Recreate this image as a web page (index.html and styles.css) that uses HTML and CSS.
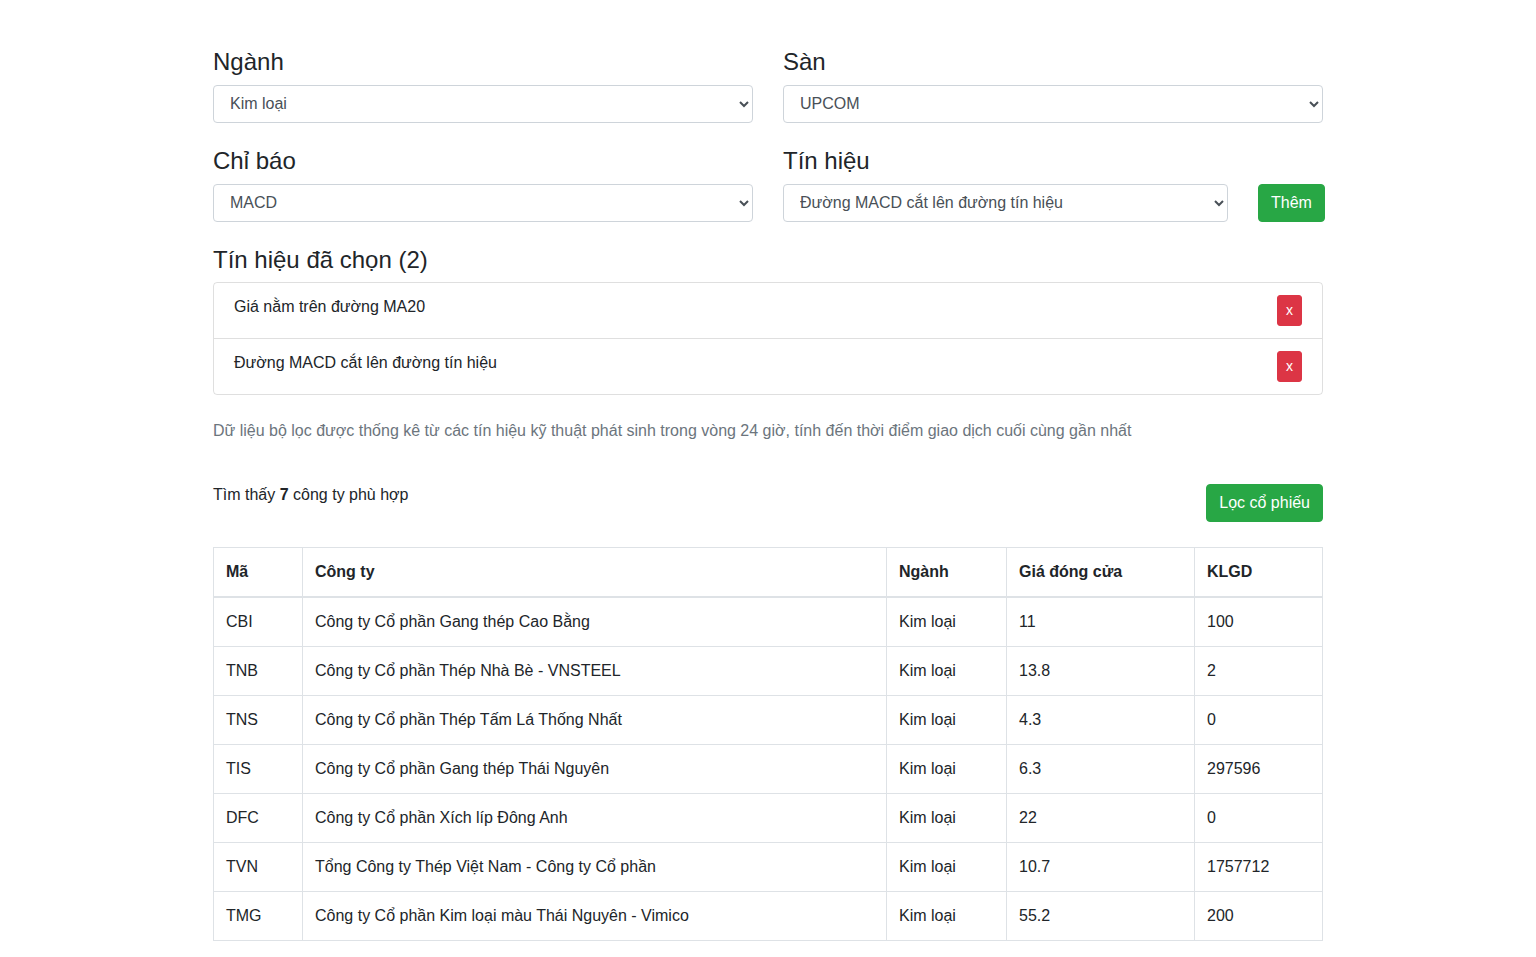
FILE: index.html
```html
<!DOCTYPE html>
<html lang="vi">
<head>
<meta charset="utf-8">
<title>Lọc cổ phiếu</title>
<link rel="stylesheet" href="styles.css">
</head>
<body>
<div class="container">
  <div class="grid-row">
    <div class="field">
      <h4 class="label">Ngành</h4>
      <select class="select"><option>Kim loại</option></select>
    </div>
    <div class="field">
      <h4 class="label">Sàn</h4>
      <select class="select"><option>UPCOM</option></select>
    </div>
  </div>
  <div class="grid-row">
    <div class="field">
      <h4 class="label">Chỉ báo</h4>
      <select class="select"><option>MACD</option></select>
    </div>
    <div class="field">
      <h4 class="label">Tín hiệu</h4>
      <div class="inline">
        <select class="select narrow"><option>Đường MACD cắt lên đường tín hiệu</option></select>
        <button class="btn btn-success add">Thêm</button>
      </div>
    </div>
  </div>
  <div class="field">
    <h4 class="label">Tín hiệu đã chọn (2)</h4>
    <ul class="list-group">
      <li class="list-item"><span>Giá nằm trên đường MA20</span><button class="btn btn-danger btn-sm">x</button></li>
      <li class="list-item"><span>Đường MACD cắt lên đường tín hiệu</span><button class="btn btn-danger btn-sm">x</button></li>
    </ul>
  </div>
  <p class="muted">Dữ liệu bộ lọc được thống kê từ các tín hiệu kỹ thuật phát sinh trong vòng 24 giờ, tính đến thời điểm giao dịch cuối cùng gần nhất</p>
  <div class="results">
    <span>Tìm thấy <b>7</b> công ty phù hợp</span>
    <button class="btn btn-success filter">Lọc cổ phiếu</button>
  </div>
  <table class="table">
    <colgroup>
      <col class="c1"><col class="c2"><col class="c3"><col class="c4"><col class="c5">
    </colgroup>
    <thead>
      <tr><th>Mã</th><th>Công ty</th><th>Ngành</th><th>Giá đóng cửa</th><th>KLGD</th></tr>
    </thead>
    <tbody>
      <tr><td>CBI</td><td>Công ty Cổ phần Gang thép Cao Bằng</td><td>Kim loại</td><td>11</td><td>100</td></tr>
      <tr><td>TNB</td><td>Công ty Cổ phần Thép Nhà Bè - VNSTEEL</td><td>Kim loại</td><td>13.8</td><td>2</td></tr>
      <tr><td>TNS</td><td>Công ty Cổ phần Thép Tấm Lá Thống Nhất</td><td>Kim loại</td><td>4.3</td><td>0</td></tr>
      <tr><td>TIS</td><td>Công ty Cổ phần Gang thép Thái Nguyên</td><td>Kim loại</td><td>6.3</td><td>297596</td></tr>
      <tr><td>DFC</td><td>Công ty Cổ phần Xích líp Đông Anh</td><td>Kim loại</td><td>22</td><td>0</td></tr>
      <tr><td>TVN</td><td>Tổng Công ty Thép Việt Nam - Công ty Cổ phần</td><td>Kim loại</td><td>10.7</td><td>1757712</td></tr>
      <tr><td>TMG</td><td>Công ty Cổ phần Kim loại màu Thái Nguyên - Vimico</td><td>Kim loại</td><td>55.2</td><td>200</td></tr>
    </tbody>
  </table>
</div>
</body>
</html>
```

FILE: styles.css
```css
* { box-sizing: border-box; }
html, body { margin: 0; padding: 0; background: #fff; }
body {
  font-family: "Liberation Sans", Arial, Helvetica, sans-serif;
  font-size: 16px;
  line-height: 1.5;
  color: #212529;
}
.container {
  width: 1110px;
  margin: 0 auto;
  padding-top: 48px;
}
.grid-row {
  display: grid;
  grid-template-columns: minmax(0, 1fr) minmax(0, 1fr);
  column-gap: 30px;
}
.field { margin-bottom: 24px; }
.label {
  margin: 0 0 8px 0;
  font-size: 24px;
  font-weight: 500;
  line-height: 1.2;
}
.select {
  display: block;
  width: 100%;
  height: 38px;
  padding: 6px 12px;
  font-family: inherit;
  font-size: 16px;
  line-height: 1.5;
  color: #495057;
  background-color: #fff;
  border: 1px solid #ced4da;
  border-radius: 4px;
}
.inline { display: flex; align-items: flex-start; width: 542px; }
.select.narrow { width: 445px; flex: none; }
.btn {
  display: inline-block;
  font-family: inherit;
  font-size: 16px;
  line-height: 1.5;
  padding: 6px 12px;
  border: 1px solid transparent;
  border-radius: 4px;
  color: #fff;
  cursor: pointer;
}
.btn-success { background: #28a745; border-color: #28a745; }
.btn-danger { background: #dc3545; border-color: #dc3545; }
.btn-sm { font-size: 14px; padding: 4px 8px; line-height: 1.5; border-radius: 3px; }
.add { margin-left: 30px; flex: none; }
.list-group {
  list-style: none;
  margin: 0;
  padding: 0;
  border: 1px solid rgba(0,0,0,0.125);
  border-radius: 4px;
}
.list-item {
  display: flex;
  justify-content: space-between;
  align-items: flex-start;
  padding: 12px 20px;
}
.list-item + .list-item { border-top: 1px solid rgba(0,0,0,0.125); }
.muted { color: #6c757d; margin: 0 0 16px 0; }
.results {
  margin-top: 40px;
  display: flex;
  justify-content: space-between;
  align-items: flex-start;
}
.filter { margin-top: 1px; }
.table {
  margin-top: 25px;
  width: 1110px;
  border-collapse: collapse;
  table-layout: fixed;
}
.c1 { width: 89px; }
.c2 { width: 584px; }
.c3 { width: 120px; }
.c4 { width: 188px; }
.c5 { width: 128px; }
.table th, .table td {
  border: 1px solid #dee2e6;
  padding: 12px;
  text-align: left;
  vertical-align: top;
  line-height: 24px;
}
.table th { font-weight: 700; border-bottom-width: 2px; }
```
